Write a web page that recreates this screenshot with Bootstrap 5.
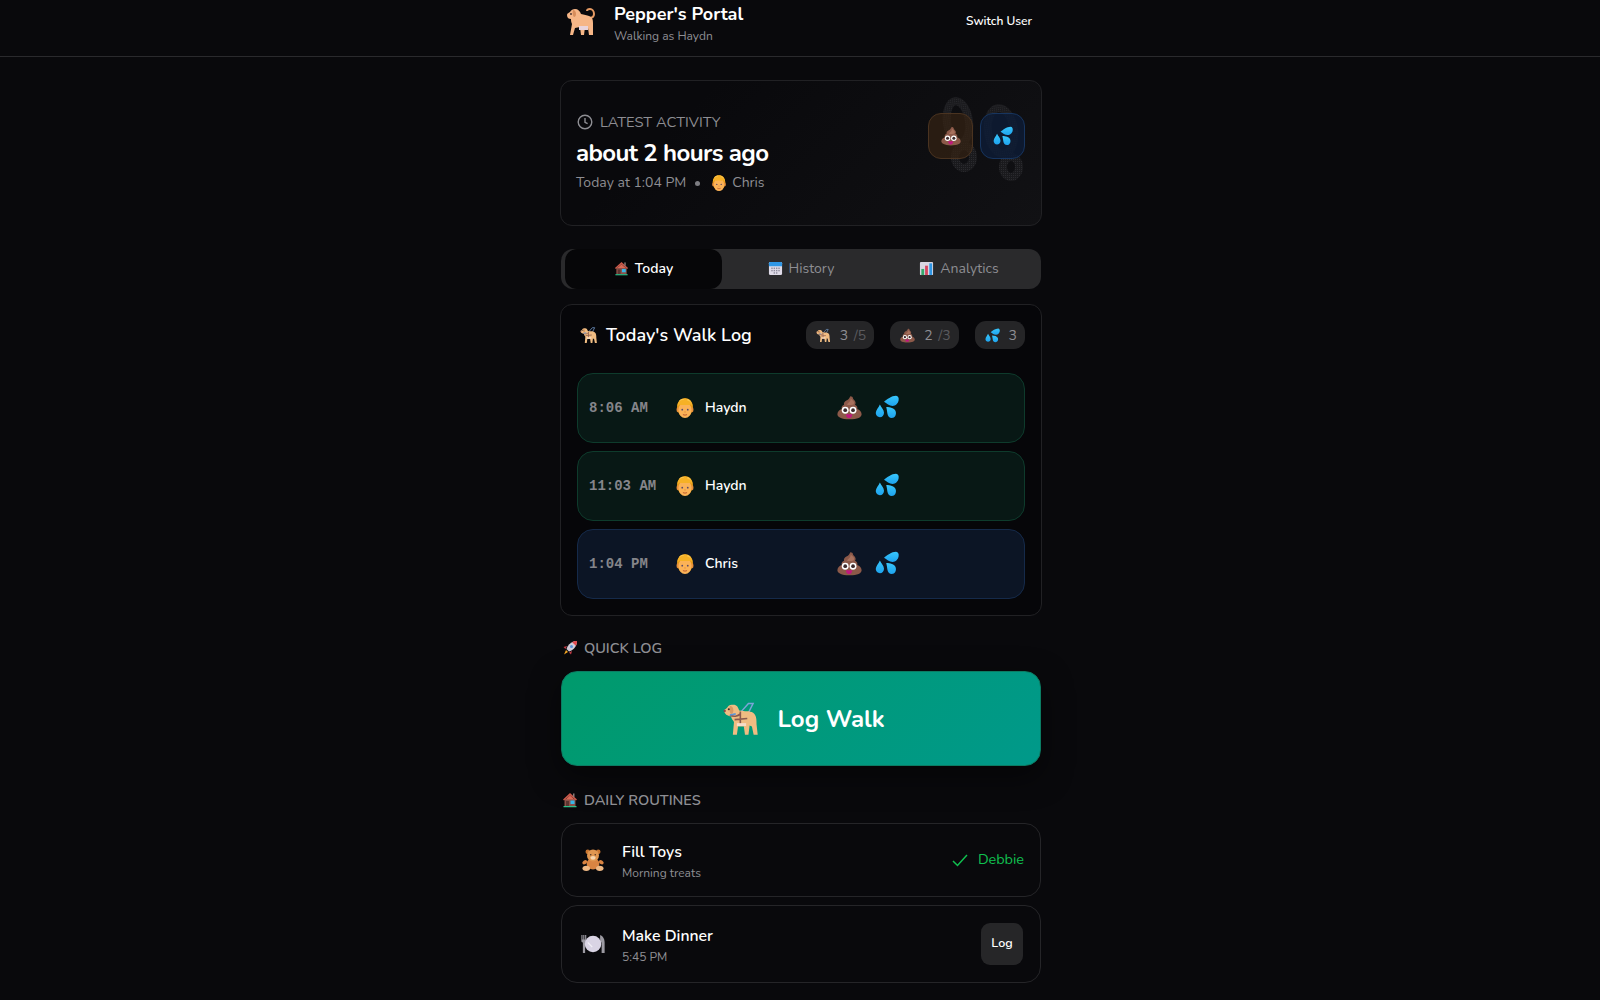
<!DOCTYPE html>
<html lang="en"><head><meta charset="utf-8"><title>Pepper's Portal</title>
<link href="https://cdn.jsdelivr.net/npm/bootstrap@5.3.0/dist/css/bootstrap.min.css" rel="stylesheet">
<style>
html,body{height:100%;overflow:hidden}
body{background:#09090c;color:#fff;font-family:"Nunito","Lato","Noto Sans",sans-serif;font-size:14px;padding-left:2px}
.sprites{display:block;width:0;height:0}
.ei{display:block;flex:none}
.s13{width:14px;height:16px}.s15{width:15px;height:15px}.s16{width:16px;height:16px}.s18{width:18px;height:18px}.s20{width:20px;height:20px}.s24{width:24px;height:24px}.s25{width:25px;height:25px}.s30{width:32px;height:32px}.s36{width:37px;height:37px}
.face18{width:18px;height:20px;margin-left:-1px}
.topbar{height:57px;border-bottom:1px solid #2a2a2d;margin-left:-2px}
.shell{width:482px;margin:0 auto}
.topin{height:56px;padding:0 10px 0 5px;transform:translateX(1px)}
.dogbox{width:49px;margin-top:-15px}
.ptitle{font-size:18px;font-weight:700;line-height:24px;margin-top:-10px}
.psub{font-size:12px;color:#8e8e93;line-height:18px;margin-top:1px}
.swbtn{font-size:12px;font-weight:600;color:#fff;background:none;border:0;padding:0;margin-top:-15px}
.latest{margin-top:23px;height:146px;border:1px solid #212124;border-radius:12px;padding:30px 16px 30px 15px;background:linear-gradient(135deg,#09090c 25%,#111114 100%);position:relative;overflow:hidden}
.lab{font-size:14.7px;color:#8e8e93;line-height:22px;gap:7px}
.clock{margin-left:1px}
.ago{font-size:24px;font-weight:700;line-height:32px;margin-top:4px;letter-spacing:-.6px}
.meta{font-size:14px;color:#8e8e93;line-height:22px;margin-top:3px}
.dotsep{width:5px;height:5px;border-radius:50%;background:#7d7d82;margin:0 12px 0 9px}
.metaface{margin-right:6px}
.tiles{position:absolute;top:32px;right:16px;gap:7px}
.tile{width:45px;height:46px;border-radius:13px;display:flex;align-items:center;justify-content:center;position:relative}
.tile-a{background:rgba(52,35,19,.72);border:1px solid #4a3320}
.tile-b{background:rgba(13,28,54,.82);border:1px solid #17355f}
.prints{position:absolute;top:14px;right:12px;width:90px;height:86px}
.tabsbar{margin:23px 0 0 1px;width:480px;height:40px;background:#2a2a2c;border-radius:12px;padding-left:4px;overflow:hidden}
.tabbtn{width:158px;height:40px;padding-bottom:2px;font-size:14px;color:#8e8e93;display:flex;align-items:center;justify-content:center;gap:6px;border-radius:12px}
.tabbtn.on{width:157px;background:#060608;color:#fff;font-weight:600}
.logcard{margin-top:15px;height:312px;border:1px solid #212124;border-radius:12px;padding:16px;background:#060609}
.headrow{margin-bottom:24px;height:28px}
.logtitle{font-size:18px;font-weight:600;line-height:28px;gap:8px;padding-left:3px}
.pill{height:28px;border-radius:11px;background:#252527;padding:0 8px 0 10px;font-size:14px;color:#8e8e93;gap:9px}
.pill i{font-style:normal;color:#5a5a5e;margin-left:2px}
.walkrow{height:70px;border-radius:16px;padding:0 11px;margin-bottom:8px}
.wgreen{background:#081815;border:1px solid #0e3b2c}
.wblue{background:#0c1525;border:1px solid #152a4a}
.wtime{font-family:"Liberation Mono",monospace;font-size:14px;font-weight:700;color:#85858a;width:88px;margin-top:1px}
.wface{width:28px}
.wperson{font-size:14px;font-weight:600;width:126px;margin-top:-1px}
.wmark{width:37px;display:flex;justify-content:center;margin-top:-2px}
.seclab{font-size:14.5px;color:#8e8e93;font-weight:600;line-height:22px;margin-left:2px;gap:6px}
.lab1{margin-top:21px}
.lab2{margin-top:23px;margin-bottom:12px}
.bigbtn{margin:12px 0 0 1px;padding:0 0 0 6px;height:95px;width:480px;border-radius:16px;background:linear-gradient(135deg,#009a6c,#00998a);border:1px solid #0b7c63;color:#fff;font-size:24px;font-weight:700;box-shadow:0 10px 30px rgba(0,0,0,.5);gap:17px}
.routine{margin-left:1px;width:480px;border:1px solid #252528;border-radius:16px;padding:0 17px 0 19px;margin-bottom:8px}
.rh74{height:74px}.rh78{height:78px}
.rbody{padding-top:2px}
.rtitle{font-size:15.8px;font-weight:600;line-height:22px}
.rsub{font-size:12px;color:#8e8e93;line-height:18px;margin-top:1px}
.rem{width:41px}
.done{color:#10c050;font-size:14.4px;gap:10px;margin-right:-1px}
.logbtn{width:42px;height:42px;border-radius:9px;background:#262628;border:0;color:#fff;font-size:12.5px;font-weight:600;padding:0 0 2px}
</style></head><body>
<svg class="sprites" aria-hidden="true"><defs>
<linearGradient id="g-drop" x1="0" y1="0" x2="0" y2="1"><stop offset="0" stop-color="#38c6fb"/><stop offset="1" stop-color="#1ea3ee"/></linearGradient>
<pattern id="p-dots" width="2" height="2" patternUnits="userSpaceOnUse"><rect width="2" height="2" fill="#1a1a1d"/><rect width="1" height="1" fill="#2a2a2e"/></pattern>
<symbol id="e-poop" viewBox="0 0 32 32"><path fill="#8c5949" d="M17 1.500c2 0 3.500 1 3.500 3 0 1 2 2 3 4 .7 1.600.2 3-.5 4 2.300.8 3.700 3 3 5.500 3 1 5.500 3.500 5.500 6.500 0 4-5 6.500-15.500 6.500S.5 28 .5 24.500c0-3 2.500-5.500 5.500-6.500-.7-2.500.5-4.700 3-5.500-.8-2.500 1-4.500 3-5.500 2-1 3.500-2 5-5.500z"/><path fill="#a8715d" d="M17.500 4c1 2 4 3 4.500 5.500.2 1-.3 2-1 2.500-3 1.500-6.500 1-8.500 0 1.500-2 5-3 5-8z"/><ellipse cx="10.500" cy="19.500" rx="4.400" ry="4.400" fill="#fff"/><ellipse cx="20.500" cy="19.500" rx="4.400" ry="4.400" fill="#fff"/><circle cx="10.500" cy="19.500" r="2.400" fill="#3b2a2c"/><circle cx="20.500" cy="19.500" r="2.400" fill="#3b2a2c"/><path fill="#c0187e" d="M11.500 24.500h8c0 3-1.500 5-4 5s-4-2-4-5z"/></symbol>
<symbol id="e-drops" viewBox="0 0 32 32"><g fill="url(#g-drop)"><path d="M12 9c4-3 10-8 16-8 3 0 4 3 3.500 6-.5 4-4 7.500-8 7.500-4.500 0-8-3.500-11.500-5.500z"/><path d="M6.500 12.500c1.500 3.500 5.500 7 5.500 11 0 3.500-2.500 6-5.500 6S1 27 1 24c0-4 4-7.500 5.500-11.500z"/><path d="M15 16c5 0 11 1.500 12.500 5.500 1.500 4.500-1 9-5 9-3.500 0-5.500-2.500-6-6-.4-3-.8-5.500-1.500-8.500z"/></g></symbol>
<symbol id="e-face" viewBox="2 0 24 29"><ellipse cx="14" cy="14" rx="11.500" ry="13.500" fill="#e89a17"/><ellipse cx="3.500" cy="17" rx="1.800" ry="3.500" fill="#e98f3a"/><ellipse cx="24.500" cy="17" rx="1.800" ry="3.500" fill="#e98f3a"/><ellipse cx="14" cy="17.500" rx="9.500" ry="11.500" fill="#fbb257"/><path fill="#f6b126" d="M3 14C2 5 8 .5 14 .5S26 5 25 14c-.8-2.500-1.500-3.500-3-4.500-2.500 1.500-5 .5-8 .5s-5.500 1-8-.5c-1.500 1-2.200 2-3 4.500z"/><path d="M6 4c2-1.500 4-2 6-2M17 2.500c2 .5 4 1.500 5 3" stroke="#fbd065" stroke-width="1.200" fill="none"/><circle cx="10" cy="17" r="1.300" fill="#5d4a66"/><circle cx="18" cy="17" r="1.300" fill="#5d4a66"/><path d="M11 24c2 1 4 1 6 0" stroke="#b4502a" stroke-width="1.300" fill="none"/><path d="M14 19v2.500" stroke="#e0903f" stroke-width="1.300"/></symbol>
<symbol id="e-dog" viewBox="0 0 32 32"><path d="M24 13c3 0 5-1 5-4s-2-5-4-5-3 1-3 2" fill="none" stroke="#e59a63" stroke-width="2"/><path fill="#f6b687" d="M2 10c0-2 2-2 3-3 1-2 3-3 5-3 3 0 5 2 6 5 3 1 6 1 8 2 3 1 4 3 4 7v12h-4l-1-7-3-1-1 8h-3l-1-8-5 1-2 7H5l2-11c-1-2-1-4-1-5-2 0-4-1-4-4z"/><path fill="#d78d5b" d="M8 5c2 0 3 2 3 4 0 2-1 3-2 3-1-1-2-4-1-7z"/><rect x="14" y="21" width="9" height="4" fill="#e9d4dc"/><circle cx="6" cy="9" r=".9" fill="#3b2a2c"/></symbol>
<symbol id="e-guide" viewBox="0 0 32 32"><path d="M14 12L22 3h4l-5 10" fill="none" stroke="#7ba4d8" stroke-width="1.300"/><path fill="#f0bc82" d="M1 9c0-1 2-1 3-3 1-2 3-2 5-2 3 0 4 2 5 5 5 1 9 0 12 2 3 2 3 6 3 10l1 9h-3.500l-1.500-7-2-1-1 8h-3l-1-7h-5l-1 7H8.500l1-11c-1-2-2.500-3-2.500-5-3 0-6-2-6-5z"/><path fill="#d99a62" d="M6 5c2 0 3 2 3 4s-1 3-2 3-2-4-1-7z"/><path d="M6 13c3 2 7 1 9-1M15 10v11M10 17l11-1" fill="none" stroke="#8a5a4e" stroke-width="1.400"/><path d="M6 13l5-1" stroke="#5f94d6" stroke-width="1.400"/><rect x="12" y="20" width="8" height="2.500" fill="#f6dcc8"/><circle cx="5" cy="8" r=".9" fill="#3b2a2c"/><circle cx="1.500" cy="9.500" r="1" fill="#8b4a4a"/></symbol>
<symbol id="e-house" viewBox="0 0 32 32"><rect x="5" y="14" width="22" height="14" fill="#8b5148"/><path fill="#c9584a" d="M16 2l14 13-2 2L16 7 4 17l-2-2z"/><path fill="#d86a56" d="M16 7l9 8H7z"/><rect x="8" y="18" width="6" height="10" fill="#5b3530"/><rect x="17" y="17" width="8" height="7" fill="#37b6e8"/><rect x="3" y="28" width="26" height="2.500" fill="#2fbf8a"/><rect x="22" y="3" width="3" height="7" fill="#8a7a78"/></symbol>
<symbol id="e-cal" viewBox="0 0 32 32"><rect x="2" y="2" width="28" height="28" rx="3" fill="#dfdbe8"/><path fill="#2f97e6" d="M2 11V5a3 3 0 0 1 3-3h22a3 3 0 0 1 3 3v6z"/><g fill="#8c8a9a"><rect x="7" y="14" width="3" height="3"/><rect x="12" y="14" width="3" height="3"/><rect x="17" y="14" width="3" height="3"/><rect x="22" y="14" width="3" height="3"/><rect x="7" y="19" width="3" height="3"/><rect x="12" y="19" width="3" height="3"/><rect x="17" y="19" width="3" height="3"/><rect x="22" y="19" width="3" height="3"/><rect x="12" y="24" width="3" height="3"/><rect x="17" y="24" width="3" height="3"/></g></symbol>
<symbol id="e-chart" viewBox="0 0 32 32"><rect x="2" y="2" width="28" height="28" rx="2" fill="#d9d6e2"/><rect x="5" y="17" width="6" height="13" fill="#35a86b"/><rect x="13" y="10" width="6" height="20" fill="#d6455f"/><rect x="22" y="5" width="6" height="25" fill="#2f97e6"/></symbol>
<symbol id="e-rocket" viewBox="0 0 32 32"><path fill="#cfcbd8" d="M30 2c-8 0-15 4-19 11l-2 5 5 5 5-2c7-4 11-11 11-19z"/><path fill="#e5484d" d="M30 2c-4 0-7 1-10 2l8 8c1-3 2-6 2-10z"/><circle cx="19" cy="13" r="3" fill="#5a92d6"/><path fill="#c23a44" d="M10 12l-7 2 4 4zM20 22l-2 7-4-4z"/><path fill="#f5a623" d="M8 20l4 4-8 5z"/></symbol>
<symbol id="e-teddy" viewBox="0 0 32 32"><circle cx="9" cy="5" r="3" fill="#c9752f"/><circle cx="23" cy="5" r="3" fill="#c9752f"/><ellipse cx="16" cy="21" rx="8.500" ry="7.500" fill="#d98442"/><circle cx="16" cy="10" r="8" fill="#e09650"/><ellipse cx="16" cy="13" rx="3.500" ry="2.500" fill="#f5d5ae"/><circle cx="13" cy="9" r="1" fill="#4a2f20"/><circle cx="19" cy="9" r="1" fill="#4a2f20"/><ellipse cx="5" cy="19" rx="3.500" ry="2.500" fill="#d98442" transform="rotate(-35 5 19)"/><ellipse cx="27" cy="19" rx="3.500" ry="2.500" fill="#d98442" transform="rotate(35 27 19)"/><ellipse cx="7" cy="27" rx="5" ry="3.500" fill="#eeb884"/><ellipse cx="25" cy="27" rx="5" ry="3.500" fill="#eeb884"/></symbol>
<symbol id="e-plate" viewBox="0 0 32 32"><g fill="#9c9aa2"><path d="M.5 4h1.500v6h1V4h1.500v6h1V4H7v8c0 1-1 2-1.500 2v14h-3V14C1 14 .5 13 .5 12z"/><path d="M25.500 14V4c3.500 1 6 5 6 10v14h-4V14z"/></g><circle cx="16" cy="16" r="11" fill="#d9d4e4"/><path stroke="#f2f0f6" stroke-width="1.500" d="M9 14l6 6"/></symbol>
</defs></svg>
<div class="topbar"><div class="shell topin d-flex align-items-center">
<div class="dogbox"><svg class="ei s30" role="img" aria-label="🐕"><use href="#e-dog"/></svg></div><div class="flex-grow-1"><div class="ptitle">Pepper's Portal</div><div class="psub">Walking as Haydn</div></div>
<button class="swbtn" type="button">Switch User</button></div></div>
<div class="shell">
<div class="latest">
<svg class="prints" viewBox="0 0 90 86" fill="none" stroke="url(#p-dots)" stroke-width="8"><ellipse cx="19" cy="27" rx="11" ry="21" transform="rotate(-8 19 27)"/><ellipse cx="25" cy="62" rx="9" ry="11"/><ellipse cx="62" cy="36" rx="13" ry="23" transform="rotate(-8 62 36)"/><ellipse cx="72" cy="72" rx="8" ry="10"/></svg>
<div class="d-flex align-items-center lab"><svg class="ei s16 clock" viewBox="0 0 16 16" fill="none" stroke="#8e8e93" stroke-width="1.400"><circle cx="8" cy="8" r="6.800"/><path d="M8 4v4.300l2.600 1.300"/></svg>LATEST ACTIVITY</div>
<div class="ago">about 2 hours ago</div>
<div class="meta d-flex align-items-center">Today at 1:04 PM<span class="dotsep"></span><svg class="ei s13 metaface" role="img" aria-label="👱"><use href="#e-face"/></svg>Chris</div>
<div class="tiles d-flex"><div class="tile tile-a"><svg class="ei s20" role="img" aria-label="💩"><use href="#e-poop"/></svg></div><div class="tile tile-b"><svg class="ei s20" role="img" aria-label="💦"><use href="#e-drops"/></svg></div></div>
</div>
<div class="tabsbar d-flex">
<div class="tabbtn on"><svg class="ei s15" role="img" aria-label="🏠"><use href="#e-house"/></svg>Today</div><div class="tabbtn"><svg class="ei s15" role="img" aria-label="📅"><use href="#e-cal"/></svg>History</div><div class="tabbtn"><svg class="ei s15" role="img" aria-label="📊"><use href="#e-chart"/></svg>Analytics</div></div>
<div class="logcard">
<div class="d-flex align-items-center justify-content-between headrow">
<div class="logtitle d-flex align-items-center"><svg class="ei s18" role="img" aria-label="🐕‍🦺"><use href="#e-guide"/></svg>Today's Walk Log</div>
<div class="d-flex gap-3"><div class="pill d-flex align-items-center"><svg class="ei s15" role="img" aria-label="🐕‍🦺"><use href="#e-guide"/></svg><span>3 <i>/5</i></span></div><div class="pill d-flex align-items-center"><svg class="ei s15" role="img" aria-label="💩"><use href="#e-poop"/></svg><span>2 <i>/3</i></span></div><div class="pill d-flex align-items-center"><svg class="ei s15" role="img" aria-label="💦"><use href="#e-drops"/></svg><span>3</span></div></div>
</div>
<div class="walkrow wgreen d-flex align-items-center"><div class="wtime">8:06 AM</div><div class="wface"><svg class="ei face18" role="img" aria-label="👱"><use href="#e-face"/></svg></div><div class="wperson">Haydn</div><div class="wmark"><svg class="ei s25" role="img" aria-label="💩"><use href="#e-poop"/></svg></div><div class="wmark"><svg class="ei s24" role="img" aria-label="💦"><use href="#e-drops"/></svg></div></div>
<div class="walkrow wgreen d-flex align-items-center"><div class="wtime">11:03 AM</div><div class="wface"><svg class="ei face18" role="img" aria-label="👱"><use href="#e-face"/></svg></div><div class="wperson">Haydn</div><div class="wmark"></div><div class="wmark"><svg class="ei s24" role="img" aria-label="💦"><use href="#e-drops"/></svg></div></div>
<div class="walkrow wblue d-flex align-items-center"><div class="wtime">1:04 PM</div><div class="wface"><svg class="ei face18" role="img" aria-label="👱"><use href="#e-face"/></svg></div><div class="wperson">Chris</div><div class="wmark"><svg class="ei s25" role="img" aria-label="💩"><use href="#e-poop"/></svg></div><div class="wmark"><svg class="ei s24" role="img" aria-label="💦"><use href="#e-drops"/></svg></div></div>
</div>
<div class="seclab lab1 d-flex align-items-center"><svg class="ei s16" role="img" aria-label="🚀"><use href="#e-rocket"/></svg>QUICK LOG</div>
<button class="bigbtn d-flex align-items-center justify-content-center" type="button"><svg class="ei s36" role="img" aria-label="🐕‍🦺"><use href="#e-guide"/></svg>Log Walk</button>
<div class="seclab lab2 d-flex align-items-center"><svg class="ei s16" role="img" aria-label="🏠"><use href="#e-house"/></svg>DAILY ROUTINES</div>
<div class="routine rh74 d-flex align-items-center"><div class="rem"><svg class="ei s24" role="img" aria-label="🧸"><use href="#e-teddy"/></svg></div><div class="flex-grow-1 rbody"><div class="rtitle">Fill Toys</div><div class="rsub">Morning treats</div></div><div class="done d-flex align-items-center"><svg class="ei s16" viewBox="0 0 16 16" fill="none" stroke="#10c050" stroke-width="1.500"><path d="M1 9l4.500 4.500L15 3"/></svg>Debbie</div></div>
<div class="routine rh78 d-flex align-items-center"><div class="rem"><svg class="ei s24" role="img" aria-label="🍽️"><use href="#e-plate"/></svg></div><div class="flex-grow-1 rbody"><div class="rtitle">Make Dinner</div><div class="rsub">5:45 PM</div></div><button class="logbtn" type="button">Log</button></div>
</div>
</body></html>
